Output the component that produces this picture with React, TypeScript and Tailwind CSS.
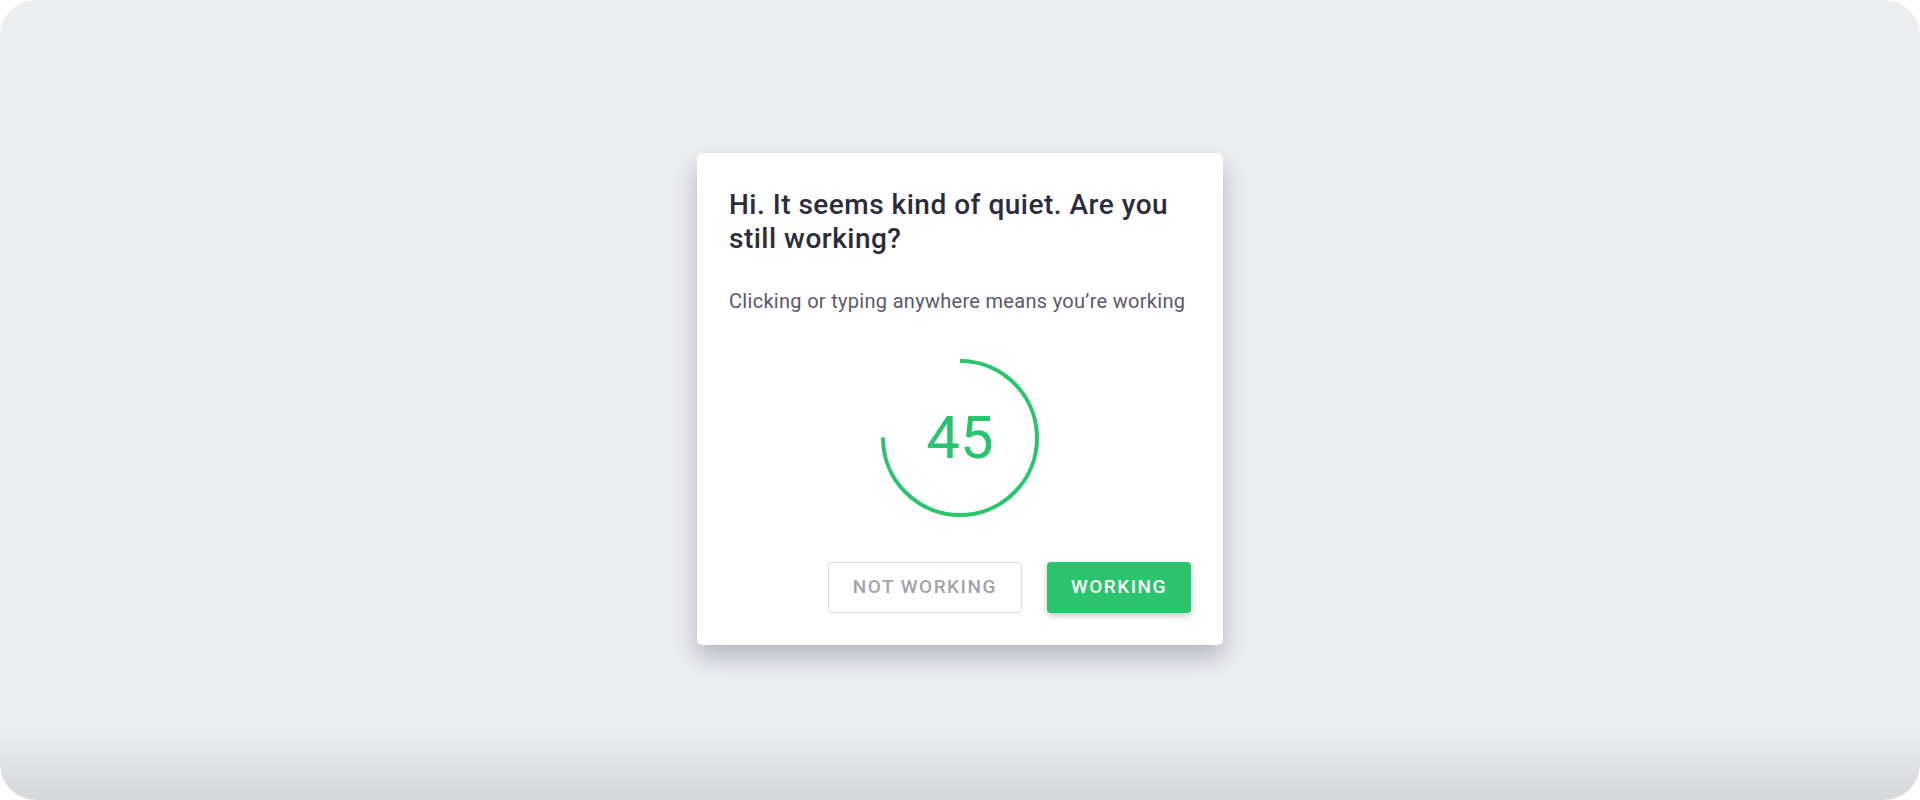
import React from 'react';

const GREEN = '#2ac46e';

const CountdownRing: React.FC<{ seconds: number }> = ({ seconds }) => {
  const r = 77;
  const c = 2 * Math.PI * r;
  // three quarters of the ring remain, from 12 o'clock clockwise to 9 o'clock
  const visible = c * 0.75;
  return (
    <div className="relative w-[160px] h-[160px]">
      <svg width="160" height="160" viewBox="0 0 160 160" className="-rotate-90">
        <circle
          cx="80"
          cy="80"
          r={r}
          fill="none"
          stroke={GREEN}
          strokeWidth="4"
          strokeDasharray={`${visible} ${c}`}
        />
      </svg>
      <div className="absolute inset-0 flex items-center justify-center text-[60px] leading-none text-[#2ac46e] font-normal">
        {seconds}
      </div>
    </div>
  );
};

export default function App() {
  return (
    <div
      className="w-[1920px] h-[800px] bg-white overflow-hidden"
      style={{ fontFamily: 'Roboto, "Noto Sans", sans-serif' }}
    >
      <div className="w-full h-full rounded-[36px] bg-[linear-gradient(to_bottom,#ecedf1_0%,#ecedf1_91%,#d6d7db_100%)] flex items-start justify-center pt-[153px]">
        <div className="w-[526px] bg-white rounded-[6px] shadow-[0_12px_24px_rgba(40,40,60,0.28)] px-8 pt-[35px] pb-8">
          <h1 className="text-[28px] leading-[34px] font-medium tracking-[0.5px] text-[#2c2c3a]">
            Hi. It seems kind of quiet. Are you still working?
          </h1>
          <p className="mt-[31px] text-[20px] leading-[28px] tracking-[0.3px] text-[#5a5a6b]">
            Clicking or typing anywhere means you’re working
          </p>

          <div className="mt-[43px] flex justify-center">
            <CountdownRing seconds={45} />
          </div>

          <div className="mt-[44px] flex justify-end gap-[25px]">
            <button className="h-[51px] px-6 rounded-[4px] border border-[#dcdce2] bg-white text-[19px] font-medium tracking-[1.5px] text-[#a3a3ae]">
              NOT WORKING
            </button>
            <button className="h-[51px] px-6 rounded-[4px] bg-[#2ac46e] text-[19px] font-medium tracking-[1.5px] text-white shadow-[0_3px_6px_rgba(0,0,0,0.22)]">
              WORKING
            </button>
          </div>
        </div>
      </div>
    </div>
  );
}
